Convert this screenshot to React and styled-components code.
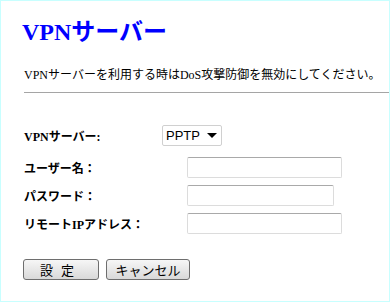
import React from 'react';
import styled, { createGlobalStyle } from 'styled-components';

const GlobalStyle = createGlobalStyle`
  html, body {
    margin: 0;
    padding: 0;
    background: #fff;
  }
  body {
    font-family: 'Liberation Serif', 'Noto Sans CJK JP', serif;
  }
`;

const Frame = styled.div`
  box-sizing: border-box;
  width: 390px;
  height: 302px;
  border: 1px solid #c8ffff;
  padding: 17px 0 0 21px;
  overflow: hidden;
`;

const Title = styled.h1`
  margin: 0;
  font-size: 24px;
  line-height: 28px;
  font-weight: bold;
  color: #0000ff;
`;

const Notice = styled.p`
  margin: 21px 0 0 2px;
  font-size: 12px;
  line-height: 16px;
  color: #000;
`;

const Rule = styled.hr`
  margin: 9px 0 0 2px;
  border: none;
  border-top: 1px solid #a5a5a5;
  height: 0;
`;

const Form = styled.form`
  margin: 32px 0 0 2px;
`;

const Row = styled.div`
  display: grid;
  grid-template-columns: ${({ $label }) => $label}px auto;
  align-items: center;
  height: 21px;
  margin-bottom: ${({ $gap }) => $gap}px;
`;

const Label = styled.label`
  font-size: 12px;
  font-weight: bold;
  color: #000;
  white-space: nowrap;
`;

const SelectWrap = styled.div`
  position: relative;
  width: 60px;
  height: 21px;
`;

const Select = styled.select`
  box-sizing: border-box;
  width: 60px;
  height: 21px;
  appearance: none;
  border: 1px solid #d0d0d0;
  border-radius: 2px;
  background: #fff;
  padding: 0 0 0 3px;
  font-family: 'Liberation Sans', Arial, sans-serif;
  font-size: 13px;
  color: #000;
  outline: none;
`;

const Arrow = styled.span`
  position: absolute;
  right: 5px;
  top: 8px;
  width: 0;
  height: 0;
  border-left: 5px solid transparent;
  border-right: 5px solid transparent;
  border-top: 5px solid #000;
  pointer-events: none;
`;

const Input = styled.input`
  box-sizing: border-box;
  width: ${({ $w }) => $w}px;
  height: 21px;
  border: 1px solid #dcdcdc;
  border-top-color: #a9a9a9;
  border-radius: 2px;
  background: #fff;
  outline: none;
`;

const Buttons = styled.div`
  display: flex;
  gap: 7px;
  margin-top: 25px;
  margin-left: -1px;
`;

const Button = styled.button`
  box-sizing: border-box;
  width: ${({ $w }) => $w}px;
  height: 21px;
  padding: 0;
  border: 1px solid #6e6e6e;
  border-radius: 3px;
  background: linear-gradient(#f6f6f6, #d9d9d9);
  font-family: 'Noto Sans CJK JP', sans-serif;
  font-size: 13px;
  line-height: 19px;
  color: #000;
  letter-spacing: ${({ $ls }) => $ls || 0}px;
`;

export default function App() {
  return (
    <>
      <GlobalStyle />
      <Frame>
        <Title>VPNサーバー</Title>
        <Notice>VPNサーバーを利用する時はDoS攻撃防御を無効にしてください。</Notice>
        <Rule />
        <Form onSubmit={e => e.preventDefault()}>
          <Row $label={138} $gap={11}>
            <Label>VPNサーバー:</Label>
            <SelectWrap>
              <Select defaultValue="PPTP">
                <option>PPTP</option>
                <option>L2TP</option>
              </Select>
              <Arrow />
            </SelectWrap>
          </Row>
          <Row $label={163} $gap={7}>
            <Label>ユーザー名：</Label>
            <Input $w={155} />
          </Row>
          <Row $label={163} $gap={7}>
            <Label>パスワード：</Label>
            <Input $w={147} type="password" />
          </Row>
          <Row $label={163} $gap={0}>
            <Label>リモートIPアドレス：</Label>
            <Input $w={155} />
          </Row>
          <Buttons>
            <Button $w={76} $ls={8}>設定</Button>
            <Button $w={84}>キャンセル</Button>
          </Buttons>
        </Form>
      </Frame>
    </>
  );
}
